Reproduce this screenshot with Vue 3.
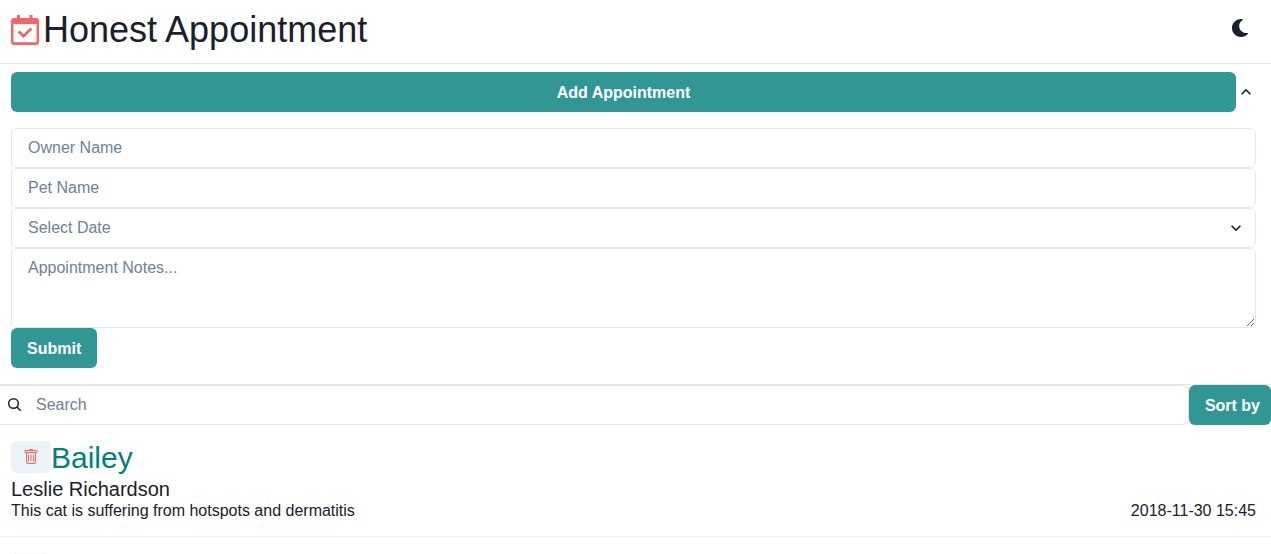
<script setup>
import { ref } from 'vue'

const open = ref(true)
const owner = ref('')
const pet = ref('')
const date = ref('')
const notes = ref('')
const query = ref('')
const appointments = [
  { pet: 'Bailey', owner: 'Leslie Richardson', notes: 'This cat is suffering from hotspots and dermatitis', date: '2018-11-30 15:45' },
  {},
]
</script>

<template>
  <main class="page">
    <header class="header">
      <h1 class="brand">
        <svg class="calendar" viewBox="0 0 28 30" aria-hidden="true">
          <path fill-rule="evenodd" d="M6 0h3v3h9.500V0h3v3H25a3 3 0 0 1 3 3v21a3 3 0 0 1-3 3H3a3 3 0 0 1-3-3V6a3 3 0 0 1 3-3h3zM2.500 9v18.300h23V9z" />
          <path class="tick" d="M7.600 16.500l4.900 4.600 8-7.700" />
        </svg>
        <span>Honest Appointment</span>
      </h1>
      <button class="plain" type="button" aria-label="Toggle dark mode">
        <svg class="moon" viewBox="0 0 512 512" aria-hidden="true"><path d="M283.211 512c78.962 0 151.079-35.925 198.857-94.792 7.068-8.708-.639-21.430-11.562-19.350-124.203 23.654-238.262-71.576-238.262-196.954 0-72.222 38.662-138.635 101.498-174.394 9.686-5.512 7.250-20.197-3.756-22.230A258.156 258.156 0 0 0 283.211 0c-141.309 0-256 114.511-256 256 0 141.309 114.511 256 256 256z" /></svg>
      </button>
    </header>

    <section class="add">
      <button class="teal toggle" type="button" :aria-expanded="open" @click="open = !open">Add Appointment</button>
      <svg class="chevron" viewBox="0 0 24 24" aria-hidden="true"><path d="M12 8l-6 6 1.410 1.410L12 10.830l4.590 4.580L18 14z" /></svg>
    </section>

    <form v-if="open" class="form" @submit.prevent>
      <input v-model="owner" class="field" type="text" placeholder="Owner Name" aria-label="Owner Name">
      <input v-model="pet" class="field" type="text" placeholder="Pet Name" aria-label="Pet Name">
      <div class="select-wrap">
        <select v-model="date" class="field select" aria-label="Select Date">
          <option value="">Select Date</option>
        </select>
        <svg class="chevron select-icon" viewBox="0 0 24 24" aria-hidden="true"><path d="M16.590 8.590L12 13.170 7.410 8.590 6 10l6 6 6-6z" /></svg>
      </div>
      <textarea v-model="notes" class="field notes" placeholder="Appointment Notes..." aria-label="Appointment Notes"></textarea>
      <button class="teal submit" type="submit">Submit</button>
    </form>

    <div class="search-row">
      <div class="search-wrap">
        <svg class="search-icon" viewBox="0 0 16 16" aria-hidden="true"><circle cx="6.500" cy="6.500" r="4.800" /><path d="M10 10l3.700 3.700" /></svg>
        <input v-model="query" class="field search" type="text" placeholder="Search" aria-label="Search">
      </div>
      <button class="teal sort" type="button">Sort by</button>
    </div>

    <ul class="list">
      <li v-for="(item, i) in appointments" :key="i" class="item">
        <div class="item-head">
          <button class="delete" type="button" aria-label="Delete appointment">
            <svg viewBox="0 0 16 16" aria-hidden="true">
              <path d="M5.500 5.500A.5.5 0 0 1 6 6v6a.5.5 0 0 1-1 0V6a.5.5 0 0 1 .5-.5zm2.500 0a.5.5 0 0 1 .5.5v6a.5.5 0 0 1-1 0V6a.5.5 0 0 1 .5-.5zm3 .5a.5.5 0 0 0-1 0v6a.5.5 0 0 0 1 0V6z" />
              <path fill-rule="evenodd" d="M14.500 3a1 1 0 0 1-1 1H13v9a2 2 0 0 1-2 2H5a2 2 0 0 1-2-2V4h-.5a1 1 0 0 1-1-1V2a1 1 0 0 1 1-1H6a1 1 0 0 1 1-1h2a1 1 0 0 1 1 1h3.500a1 1 0 0 1 1 1v1zM4.118 4L4 4.059V13a1 1 0 0 0 1 1h6a1 1 0 0 0 1-1V4.059L11.882 4H4.118zM2.500 3V2h11v1h-11z" />
            </svg>
          </button>
          <h2 v-if="item.pet">{{ item.pet }}</h2>
        </div>
        <template v-if="item.pet">
          <p class="owner">{{ item.owner }}</p>
          <div class="details"><span>{{ item.notes }}</span><time>{{ item.date }}</time></div>
        </template>
      </li>
    </ul>
  </main>
</template>

<style>
body { background: #fff; }
</style>

<style scoped>
*, *::before, *::after { box-sizing: border-box; }
.page { height: 100vh; overflow: hidden; font: 16px/24px "Liberation Sans", Arial, sans-serif; color: #1a202c; }
button, input, select, textarea { font: inherit; color: inherit; margin: 0; }
button { border: 0; cursor: pointer; }
svg { display: block; fill: currentColor; }
h1, h2, p, ul { margin: 0; padding: 0; font-weight: 400; }
.header { display: flex; justify-content: space-between; padding: 3px 22px 6px 11px; border-bottom: 1px solid #e2e8f0; }
.brand { display: flex; align-items: center; gap: 4px; font-size: 36px; line-height: 54px; }
.calendar { width: 28px; height: 30px; color: #f56565; }
.tick { fill: none; stroke: currentColor; stroke-width: 2.800; }
.plain { padding: 0 0 4px; background: none; align-self: center; }
.moon { width: 18px; height: 18px; }
.add { display: flex; align-items: center; padding: 8px 15px 8px 11px; }
.teal { height: 40px; padding: 2px 16px 0; border-radius: 6px; background: #319795; color: #fff; font-weight: 700; white-space: nowrap; }
.toggle { flex: 1; }
.chevron { width: 20px; height: 20px; }
.form { display: flex; flex-direction: column; padding: 8px 15px 16px 11px; border-bottom: 1px solid #e2e8f0; }
.field { display: block; width: 100%; height: 40px; padding: 0 16px; border: 1px solid #e2e8f0; border-radius: 6px; background: #fff; outline: 0; }
.field::placeholder { color: #718096; opacity: 1; }
.select-wrap, .search-wrap { position: relative; }
.select { appearance: none; color: #718096; }
.select-icon { position: absolute; right: 10px; top: 10px; pointer-events: none; }
.notes { height: 80px; padding-top: 8px; line-height: 22px; resize: vertical; }
.submit { align-self: flex-start; }
.search-row { display: flex; }
.search-wrap { flex: 1; }
.search { padding-left: 36px; border-left: 0; border-radius: 0 6px 6px 0; }
.search-icon { position: absolute; left: 7px; top: 12px; width: 16px; height: 16px; fill: none; stroke: currentColor; stroke-width: 1.500; }
.sort { padding-right: 11px; }
.list { list-style: none; }
.item { padding: 16px 15px 16px 11px; border-bottom: 1px solid #edf2f7; }
.item-head { display: flex; margin-bottom: 2px; }
.delete { display: flex; align-items: center; justify-content: center; width: 40px; height: 32px; padding: 0; border-radius: 6px; background: #edf2f7; color: #f56565; }
.delete svg { width: 16px; height: 16px; }
h2 { font-size: 30px; line-height: 34px; color: #008080; }
.owner { font-size: 20px; line-height: 24px; }
.details { display: flex; justify-content: space-between; line-height: 19px; }
</style>
